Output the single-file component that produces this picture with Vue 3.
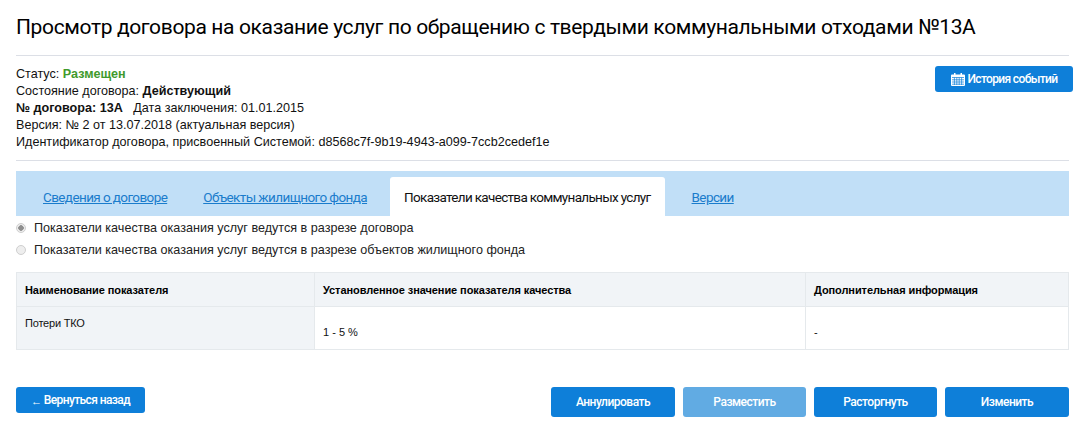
<script setup>
import { ref } from 'vue'

const tabs = [
  'Сведения о договоре',
  'Объекты жилищного фонда',
  'Показатели качества коммунальных услуг',
  'Версии'
]
const activeTab = ref(2)
const mode = ref('contract')
</script>

<template>
  <div class="page">
    <h1>Просмотр договора на оказание услуг по обращению с твердыми коммунальными отходами №13А</h1>

    <section class="info">
      <div class="info-lines">
        <div>Статус: <b class="green">Размещен</b></div>
        <div>Состояние договора: <b>Действующий</b></div>
        <div><b>№ договора: 13А</b>&nbsp;&nbsp; Дата заключения: 01.01.2015</div>
        <div>Версия: № 2 от 13.07.2018 (актуальная версия)</div>
        <div>Идентификатор договора, присвоенный Системой: d8568c7f-9b19-4943-a099-7ccb2cedef1e</div>
      </div>
      <button class="btn history">
        <svg class="cal" viewBox="0 0 14 13" width="14" height="13">
          <path fill="#fff" d="M3 0h1.500v1.500H9.500V0H11v1.500h2a1 1 0 0 1 1 1V12a1 1 0 0 1-1 1H1a1 1 0 0 1-1-1V2.500a1 1 0 0 1 1-1h2z"/>
          <path fill="none" stroke="#0e7fd9" stroke-width=".7" d="M1 4.500h12M1 6.800h12M1 9h12M1 11.200h12M3.400 4.500v7.500M5.800 4.500v7.500M8.200 4.500v7.500M10.600 4.500v7.500"/>
        </svg>
        История событий
      </button>
    </section>

    <nav class="tabs">
      <a
        v-for="(tab, i) in tabs"
        :key="tab"
        href="#"
        class="tab"
        :class="{ active: i === activeTab }"
        @click.prevent="activeTab = i"
      >{{ tab }}</a>
    </nav>

    <div class="radios">
      <label class="radio-row">
        <input v-model="mode" type="radio" value="contract" disabled>
        Показатели качества оказания услуг ведутся в разрезе договора
      </label>
      <label class="radio-row">
        <input v-model="mode" type="radio" value="objects" disabled>
        Показатели качества оказания услуг ведутся в разрезе объектов жилищного фонда
      </label>
    </div>

    <table class="grid">
      <colgroup>
        <col class="c1">
        <col class="c2">
        <col>
      </colgroup>
      <thead>
        <tr>
          <th>Наименование показателя</th>
          <th>Установленное значение показателя качества</th>
          <th>Дополнительная информация</th>
        </tr>
      </thead>
      <tbody>
        <tr>
          <td class="name">Потери ТКО</td>
          <td class="val">1 - 5 %</td>
          <td class="val">-</td>
        </tr>
      </tbody>
    </table>

    <footer class="actions">
      <button class="btn back"><span class="arrow">←</span> Вернуться назад</button>
      <div class="right">
        <button class="btn big">Аннулировать</button>
        <button class="btn big off">Разместить</button>
        <button class="btn big">Расторгнуть</button>
        <button class="btn big">Изменить</button>
      </div>
    </footer>
  </div>
</template>

<style>
html, body {
  background: #fff;
}
</style>

<style scoped>
.page {
  width: 1083px;
  height: 438px;
  box-sizing: border-box;
  padding: 0 14px 0 16px;
  overflow: hidden;
  font-family: "Liberation Sans", Arial, sans-serif;
  font-size: 12.6px;
  color: #111;
}

h1 {
  margin: 0;
  padding: 14px 0 0;
  height: 56px;
  box-sizing: border-box;
  border-bottom: 1px solid #dcdfe6;
  font-family: Roboto, sans-serif;
  font-size: 21px;
  line-height: 27px;
  letter-spacing: -0.36px;
  font-weight: 400;
  color: #000;
  white-space: nowrap;
}

.info {
  display: flex;
  justify-content: space-between;
  align-items: flex-start;
  height: 105px;
  box-sizing: border-box;
  padding-top: 9px;
  border-bottom: 1px solid #dcdfe6;
}

.info-lines {
  margin-top: 1px;
  line-height: 17px;
}

.green {
  color: #3f9a2c;
}

.btn {
  border: none;
  border-radius: 3px;
  background: #0e7fd9;
  color: #fff;
  font-family: Roboto, sans-serif;
  font-size: 12px;
  font-weight: 500;
  letter-spacing: -0.6px;
  cursor: pointer;
  padding: 0;
}

.history {
  display: flex;
  align-items: center;
  justify-content: center;
  gap: 3px;
  width: 138px;
  height: 26px;
  margin: 1px -4px 0 0;
  letter-spacing: -0.65px;
}

.tabs {
  display: flex;
  align-items: flex-end;
  height: 45px;
  margin-top: 10px;
  padding-left: 9px;
  background: #c1dff7;
}

.tab {
  display: block;
  height: 39px;
  line-height: 41px;
  padding: 0 18px;
  font-family: Roboto, sans-serif;
  font-size: 13.5px;
  letter-spacing: -0.6px;
  color: #1a7ccc;
  white-space: nowrap;
}

.tab.active {
  padding: 0 14px;
  margin-left: 5px;
  margin-right: 9px;
  background: #fff;
  border-radius: 3px 3px 0 0;
  letter-spacing: -0.68px;
  color: #111;
  text-decoration: none;
}

.radios {
  padding-top: 1px;
}

.radio-row {
  display: flex;
  align-items: center;
  gap: 8px;
  height: 22px;
  line-height: 22px;
  color: #222;
}

.radio-row input {
  appearance: none;
  width: 10px;
  height: 10px;
  margin: 0;
  border: 1px solid #cfcfcf;
  border-radius: 50%;
  background: #eee;
}

.radio-row input:checked {
  background: radial-gradient(circle, #8f8f8f 0 2.5px, #eee 3px);
}

.grid {
  width: 100%;
  margin-top: 11px;
  border-collapse: collapse;
  table-layout: fixed;
  font-size: 11px;
}

.c1 {
  width: 298px;
}

.c2 {
  width: 491px;
}

th,
td {
  box-sizing: border-box;
  border: 1px solid #e5e9ec;
  padding: 0 8px;
  text-align: left;
}

th {
  height: 34px;
  background: #f1f4f7;
  font-weight: 700;
  letter-spacing: -0.08px;
  color: #000;
}

td {
  height: 43px;
  color: #111;
}

.name {
  background: #f1f4f7;
  vertical-align: top;
  padding-top: 10px;
  letter-spacing: -0.2px;
}

.val {
  vertical-align: bottom;
  padding-bottom: 11px;
}

.actions {
  display: flex;
  justify-content: space-between;
  align-items: flex-start;
  margin-top: 37px;
}

.back {
  width: 129px;
  height: 26px;
}

.arrow {
  position: relative;
  top: 1px;
  font-size: 11px;
  font-weight: 400;
}

.right {
  display: flex;
  gap: 8px;
}

.big {
  width: 123px;
  height: 30px;
  letter-spacing: -0.5px;
}

.big:first-child,
.big:last-child {
  width: 124px;
}

.off {
  background: #61abe3;
}
</style>
